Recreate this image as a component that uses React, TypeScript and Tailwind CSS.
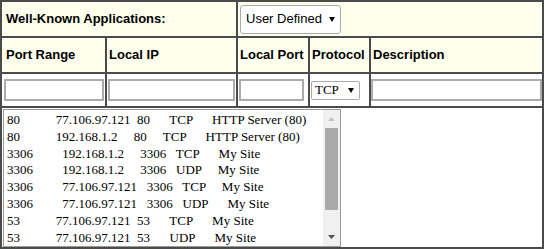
const sans = "font-['Liberation_Sans',Arial,sans-serif]";
const serif = "font-['Liberation_Serif','Times_New_Roman',serif]";

// each entry: tokens joined by N spaces, as the old page padded them
const rows: [string, number][][] = [
  [['80', 11], ['77.106.97.121', 2], ['80', 6], ['TCP', 6], ['HTTP Server (80)', 0]],
  [['80', 11], ['192.168.1.2', 5], ['80', 5], ['TCP', 6], ['HTTP Server (80)', 0]],
  [['3306', 9], ['192.168.1.2', 5], ['3306', 3], ['TCP', 6], ['My Site', 0]],
  [['3306', 9], ['192.168.1.2', 5], ['3306', 3], ['UDP', 5], ['My Site', 0]],
  [['3306', 9], ['77.106.97.121', 3], ['3306', 3], ['TCP', 5], ['My Site', 0]],
  [['3306', 9], ['77.106.97.121', 3], ['3306', 3], ['UDP', 6], ['My Site', 0]],
  [['53', 11], ['77.106.97.121', 2], ['53', 6], ['TCP', 6], ['My Site', 0]],
  [['53', 11], ['77.106.97.121', 2], ['53', 6], ['UDP', 6], ['My Site', 0]],
];

function Caret() {
  return (
    <svg width="6" height="5" viewBox="0 0 6 5">
      <path d="M0 0h6L3 5z" fill="#000" />
    </svg>
  );
}

function ScrollArrow({ up, color }: { up?: boolean; color: string }) {
  return (
    <svg width="7" height="4" viewBox="0 0 7 4">
      <path d={up ? 'M0 4h7L3.5 0z' : 'M0 0h7L3.5 4z'} fill={color} />
    </svg>
  );
}

function Head({ children, first, className = '' }: { children: React.ReactNode; first?: boolean; className?: string }) {
  return (
    <div className={`bg-[#ffffee] flex items-center ${first ? 'pl-[4px]' : 'pl-[2px]'} text-[13px] font-bold text-black ${sans} ${className}`}>
      {children}
    </div>
  );
}

const inputCls = 'h-[22px] border-2 border-[#ababab] bg-white';

export default function App() {
  return (
    <div className="bg-white w-[546px] h-[249px] overflow-hidden">
      <div className="w-[544px] bg-[#4b4b4b] p-[2px] grid grid-cols-[103px_129px_70px_59px_171px] grid-rows-[34px_34px_32px_139px] gap-[2px]">
        {/* row 1 */}
        <Head first className="col-span-2">Well-Known Applications:</Head>
        <div className="col-span-3 bg-[#ffffee] flex items-center pl-[2px]">
          <div className={`w-[101px] h-[29px] border border-[#aaaaaa] rounded-[3px] bg-white flex items-center justify-between pl-[5px] pr-[5px] text-[13px] text-black ${sans}`}>
            <span>User Defined</span>
            <Caret />
          </div>
        </div>

        {/* row 2 */}
        <Head first>Port Range</Head>
        <Head>Local IP</Head>
        <Head>Local Port</Head>
        <Head>Protocol</Head>
        <Head>Description</Head>

        {/* row 3 */}
        <div className="bg-white flex items-center pl-[2px]">
          <div className={`w-[100px] ${inputCls}`} />
        </div>
        <div className="bg-white flex items-center pl-[1px]">
          <div className={`w-[127px] ${inputCls}`} />
        </div>
        <div className="bg-white flex items-center pl-[1px]">
          <div className={`w-[65px] ${inputCls}`} />
        </div>
        <div className="bg-white flex items-center pl-[1px]">
          <div className={`w-[49px] h-[19px] border border-[#aaaaaa] rounded-[2px] bg-white flex items-center justify-between pl-[3px] pr-[5px] text-[13px] text-black ${serif}`}>
            <span>TCP</span>
            <Caret />
          </div>
        </div>
        <div className="bg-white flex items-center">
          <div className={`w-[171px] ${inputCls}`} />
        </div>

        {/* row 4 */}
        <div className="col-span-5 bg-white pl-[1px] pt-[1px]">
          <div className="w-[338px] h-[138px] border border-[#9a9a9a] flex bg-white">
            <div className={`flex-1 pl-[3px] pt-[2px] text-[13px] leading-[16.8px] text-black ${serif}`}>
              {rows.map((r, i) => (
                <div key={i} className="whitespace-pre">
                  {r.map(([t, n]) => t + ' '.repeat(n)).join('')}
                </div>
              ))}
            </div>
            <div className="w-[17px] bg-[#f0f0f0] flex flex-col items-center">
              <div className="h-[17px] flex items-center justify-center pt-[1px]">
                <ScrollArrow up color="#c3c3c3" />
              </div>
              <div className="mt-px w-[13px] h-[82px] bg-[#aaaaaa]" />
              <div className="flex-1" />
              <div className="h-[17px] flex items-center justify-center pb-[1px]">
                <ScrollArrow color="#505050" />
              </div>
            </div>
          </div>
        </div>
      </div>
    </div>
  );
}
